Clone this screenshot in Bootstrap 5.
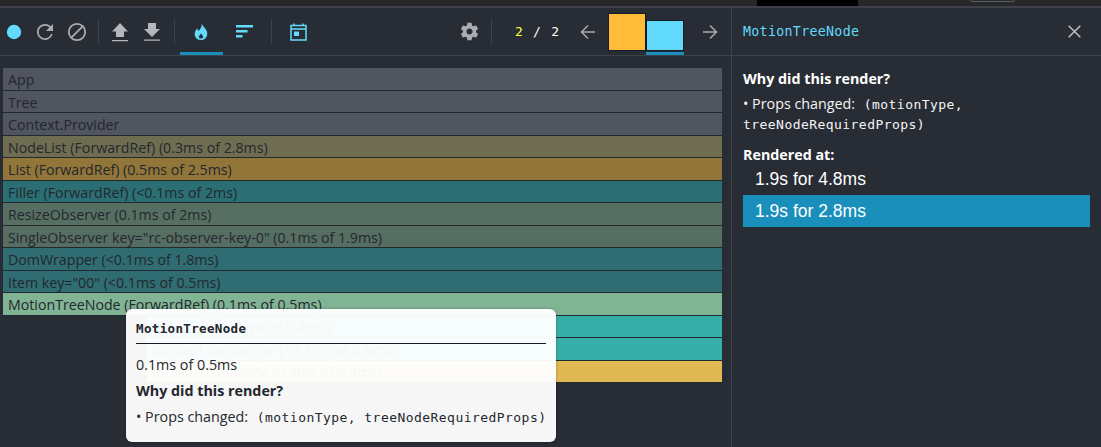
<!doctype html>
<html lang="en">
<head>
<meta charset="utf-8">
<title>Profiler</title>
<link href="https://cdn.jsdelivr.net/npm/bootstrap@5.3.0/dist/css/bootstrap.min.css" rel="stylesheet">
<style>
html,body{height:447px;overflow:hidden;background:#282c34;font-family:"Open Sans","Noto Sans",sans-serif;font-size:14px}
.topstrip{height:6px;background:#28282a;border-bottom:2px solid #3d424a;position:relative;box-sizing:content-box}
.topstrip i{position:absolute;top:0;left:757px;width:101px;height:6px;background:#000}
.topstrip b{position:absolute;top:-4px;left:970px;width:45px;height:6px;border:1px solid #5a5d63;border-radius:2px}
.shell{height:439px}
.leftpane{width:732px;border-right:1px solid #3d424a;position:relative;flex:none}
.rightpane{flex:1 1 auto;min-width:0;color:#fff}
.tbar{height:48px;border-bottom:1px solid #3d424a;padding-left:6px}
.rbar{height:48px;border-bottom:1px solid #3d424a;padding:0 20px 0 11px}
.ftitle{font-family:"DejaVu Sans Mono",monospace;font-size:13.3px;letter-spacing:.3px;color:#61dafb}
.icn{display:block;flex:none}
.sep{width:1px;height:25px;background:#3d424a;flex:none}
.tabmark{position:relative;height:47px;display:flex;align-items:center;justify-content:center}
.tabmark.on::after{content:"";position:absolute;left:0;right:0;bottom:0;height:3px;background:#1a8fbc}
.flame{padding:12px 0 0 3px}
.fbar{height:22.5px;width:719px;font-size:14.2px;line-height:23px;padding-left:5px;color:#23272e;border-bottom:1px solid #23272e;white-space:nowrap;overflow:hidden}
.fbar.offs{margin-left:144px;width:575px}
.c-a{background:#50555f}
.c-b{background:#6f6d51}
.c-c{background:#927538}
.c-d{background:#2b6f74}
.c-e{background:#576f63}
.c-f{background:#566d62}
.c-g{background:#2f6d72}
.c-h{background:#81b494}
.c-i{background:#36afa8}
.c-j{background:#e0b955}
.commit{border:1px solid #141a26;flex:none}
.tip{position:absolute;left:126px;top:301px;width:430px;height:133px;background:rgba(255,255,255,.96);border-radius:6px;padding:10px 10px 0;color:#23272e;font-size:14.3px;line-height:19px;box-shadow:0 0 3px rgba(0,0,0,.3)}
.tip-name{font-family:"DejaVu Sans Mono",monospace;font-weight:700;font-size:12.5px;letter-spacing:.35px;line-height:16px;padding-bottom:6px;border-bottom:1px solid #141a26;margin-bottom:6px;padding-top:2px}
.tip-h{font-weight:700;margin-top:7px}
.mono2{font-family:"DejaVu Sans Mono",monospace;font-size:13px;letter-spacing:.45px;line-height:16px;margin-left:5px}
.mono3{margin-left:0}
.why{padding:13px 11px 0}
.why-h{font-weight:700;font-size:14.3px;line-height:19px}
.why-p{font-size:14.3px;line-height:20px;margin-top:6px;color:#f5f5f5}
.at{font-family:"Liberation Sans",sans-serif;font-size:17.5px;line-height:32px;height:32px;padding-left:12px;width:347px;color:#fff}
.at.on{background:#1a8fbc}
.counter{margin-left:23px;font-family:"DejaVu Sans Mono",monospace;font-size:13px;width:44px;justify-content:space-between;color:#fff}
.cur{color:#ffff40}
</style>
</head>
<body>
<div class="topstrip"><i></i><b></b></div>
<div class="shell d-flex">
  <div class="leftpane">
    <div class="tbar d-flex align-items-center">
      <svg class="icn" width="16" height="16" viewBox="0 0 16 16"><circle cx="8" cy="8" r="7.2" fill="#61dafb"/></svg>
      <svg class="icn" style="margin-left:11px" width="24" height="24" viewBox="0 0 24 24"><path d="M17.65 6.35A8 8 0 1 0 19.7 14h-1.7A6.300 6.300 0 1 1 12 5.700c1.760 0 3.240.7 4.400 1.900L13 11h7V4z" fill="#a9acb3"/></svg>
      <svg class="icn" style="margin-left:10px" width="20" height="20" viewBox="0 0 20 20"><circle cx="10" cy="10" r="8.2" fill="none" stroke="#a9acb3" stroke-width="1.8"/><path d="M4.3 15.7 15.7 4.3" stroke="#a9acb3" stroke-width="1.8"/></svg>
      <span class="sep" style="margin-left:11px"></span>
      <svg class="icn" style="margin-left:12px" width="18" height="20" viewBox="0 0 18 20"><path d="M9 1 17 9.500H13V15H5V9.500H1ZM1 18H17V19.300H1Z" fill="#b4b7bd"/></svg>
      <svg class="icn" style="margin-left:14px" width="18" height="20" viewBox="0 0 18 20"><path d="M5 1H13V7H17L9 15 1 7H5ZM1 17.500H17V18.800H1Z" fill="#b4b7bd"/></svg>
      <span class="sep" style="margin-left:13px"></span>
      <div class="tabmark on" style="margin-left:5px;width:43px;padding-right:2px">
        <svg class="icn" width="14" height="17" viewBox="0 0 14 17"><path d="M7.500 0C8.200 3 11 4.500 12.500 7.500 14.500 11.500 12.500 17 7 17 2 17 -.5 12.500 1.200 8.500 1.800 7 2.700 6.300 3 5.500 3.800 6.500 4.200 7.200 4.500 8 6.800 6 8.200 3 7.500 0ZM7 10.500 4.800 13.500C4.800 15 6 15.500 7 15.500 8 15.500 9.200 15 9.200 13.500Z" fill="#61dafb"/></svg>
      </div>
      <div class="tabmark" style="margin-left:13px;width:17px">
        <svg class="icn" width="17" height="13" viewBox="0 0 17 13"><path d="M0 0H17V2.600H0ZM0 5H11.500V7.600H0ZM0 10H6.500V12.600H0Z" fill="#61dafb"/></svg>
      </div>
      <span class="sep" style="margin-left:18px"></span>
      <svg class="icn" style="margin-left:18px" width="17" height="18" viewBox="0 0 17 18"><path d="M4 .5V3M13 .5V3M1 2.500H16V17H1ZM1 6H16" fill="none" stroke="#61dafb" stroke-width="1.500"/><rect x="4" y="8.500" width="5" height="4.500" fill="#61dafb"/></svg>

      <svg class="icn ms-auto" width="21" height="21" viewBox="0 0 24 24"><path d="M19.430 12.980c.04-.32.07-.64.07-.98s-.03-.66-.07-.98l2.110-1.650c.19-.15.240-.42.120-.64l-2-3.460c-.12-.22-.39-.3-.61-.22l-2.490 1c-.52-.4-1.080-.73-1.690-.98l-.38-2.650A.488.488 0 0 0 14 2h-4c-.25 0-.46.18-.49.420l-.38 2.650c-.61.25-1.170.59-1.690.98l-2.490-1c-.23-.09-.49 0-.61.220l-2 3.460c-.13.22-.07.49.12.640l2.110 1.650c-.04.32-.07.650-.07.980s.03.660.07.980l-2.110 1.650c-.19.150-.24.420-.12.640l2 3.460c.12.220.39.300.61.220l2.490-1c.52.400 1.080.730 1.690.980l.38 2.650c.03.240.24.420.49.420h4c.25 0 .46-.18.49-.42l.38-2.650c.61-.25 1.170-.59 1.690-.98l2.490 1c.23.090.49 0 .61-.22l2-3.460c.12-.22.070-.49-.12-.64zM12 15.500c-1.930 0-3.500-1.570-3.500-3.500s1.570-3.500 3.500-3.500 3.500 1.570 3.500 3.500-1.570 3.500-3.500 3.500z" fill="#a9acb3"/></svg>
      <span class="sep" style="margin-left:11px"></span>
      <span class="counter d-flex"><span class="cur">2</span><span>/</span><span>2</span></span>
      <svg class="icn" style="margin-left:21px" width="16" height="16" viewBox="0 0 16 16"><path d="M15 8H1.500M8 1.500 1.500 8 8 14.500" fill="none" stroke="#a9acb3" stroke-width="1.500"/></svg>
      <div class="d-flex flex-column align-self-start" style="margin-left:12px;margin-top:5px">
        <span class="commit" style="width:38px;height:38px;background:#ffbc39"></span>
      </div>
      <div class="tabmark on align-self-start" style="width:38px;margin-left:0;align-items:flex-start">
        <span class="commit" style="width:38px;height:31px;margin-top:12px;background:#61dafb"></span>
      </div>
      <svg class="icn" style="margin-left:18px;margin-right:13px" width="16" height="16" viewBox="0 0 16 16"><path d="M1 8H14.500M8 1.500 14.500 8 8 14.500" fill="none" stroke="#a9acb3" stroke-width="1.500"/></svg>
    </div>
    <div class="flame">
      <div class="fbar c-a">App</div>
      <div class="fbar c-a">Tree</div>
      <div class="fbar c-a">Context.Provider</div>
      <div class="fbar c-b">NodeList (ForwardRef) (0.3ms of 2.8ms)</div>
      <div class="fbar c-c">List (ForwardRef) (0.5ms of 2.5ms)</div>
      <div class="fbar c-d">Filler (ForwardRef) (&lt;0.1ms of 2ms)</div>
      <div class="fbar c-e">ResizeObserver (0.1ms of 2ms)</div>
      <div class="fbar c-f">SingleObserver key="rc-observer-key-0" (0.1ms of 1.9ms)</div>
      <div class="fbar c-g">DomWrapper (&lt;0.1ms of 1.8ms)</div>
      <div class="fbar c-g">Item key="00" (&lt;0.1ms of 0.5ms)</div>
      <div class="fbar c-h">MotionTreeNode (ForwardRef) (0.1ms of 0.5ms)</div>
      <div class="fbar offs c-i">TreeNode (0.1ms of 0.4ms)</div>
      <div class="fbar offs c-i">Context.Consumer (&lt;0.1ms of 0.4ms)</div>
      <div class="fbar offs c-j">InternalTreeNode (0.4ms of 0.4ms)</div>
    </div>
    <div class="tip">
      <div class="tip-name">MotionTreeNode</div>
      <div style="margin-top:11px">0.1ms of 0.5ms</div>
      <div class="tip-h">Why did this render?</div>
      <div class="text-nowrap" style="margin-top:7px">• Props changed: <span class="mono2">(motionType, treeNodeRequiredProps)</span></div>
    </div>
  </div>
  <div class="rightpane">
    <div class="rbar d-flex align-items-center justify-content-between">
      <span class="ftitle">MotionTreeNode</span>
      <svg class="icn" width="13" height="13" viewBox="0 0 13 13"><path d="M.7.700 12.300 12.300M12.300.700.700 12.300" stroke="#c4c6ca" stroke-width="1.400"/></svg>
    </div>
    <div class="why">
      <div class="why-h">Why did this render?</div>
      <div class="why-p">• Props changed: <span class="mono2">(motionType,</span><br><span class="mono2 mono3">treeNodeRequiredProps)</span></div>
      <div class="why-h" style="margin-top:11px">Rendered at:</div>
      <div class="at" style="margin-top:-1px">1.9s for 4.8ms</div>
      <div class="at on">1.9s for 2.8ms</div>
    </div>
  </div>
</div>
<script src="https://cdn.jsdelivr.net/npm/bootstrap@5.3.0/dist/js/bootstrap.bundle.min.js"></script>
</body>
</html>
